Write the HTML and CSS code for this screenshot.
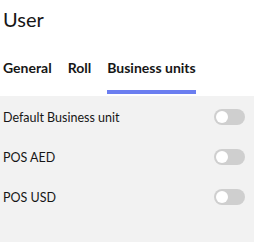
FILE: index.html
```html
<!DOCTYPE html>
<html lang="en">
<head>
    <meta charset="UTF-8">
    <meta name="viewport" content="width=device-width, initial-scale=1.0">
    <title>User</title>
    <link rel="stylesheet" href="styles.css">
</head>
<body>
    <div class="header">
        <h1 class="title">User</h1>
        <div class="tabs">
            <div class="tab">General</div>
            <div class="tab">Roll</div>
            <div class="tab active">Business units</div>
        </div>
    </div>

    <div class="panel">
        <div class="row">
            <span class="row-label">Default Business unit</span>
            <span class="toggle"><span class="knob"></span></span>
        </div>
        <div class="row">
            <span class="row-label">POS AED</span>
            <span class="toggle"><span class="knob"></span></span>
        </div>
        <div class="row">
            <span class="row-label">POS USD</span>
            <span class="toggle"><span class="knob"></span></span>
        </div>
    </div>
</body>
</html>
```

FILE: styles.css
```css
:root {
    --primary: #6b7ef0;
    --panel: #f2f2f2;
    --text: #161616;
    --toggle: #cfcfcf;
}

* {
    box-sizing: border-box;
    margin: 0;
    padding: 0;
}

html, body {
    height: 100%;
}

body {
    font-family: 'Lato', sans-serif;
    color: var(--text);
    background: #fff;
    display: flex;
    flex-direction: column;
}

.header {
    padding: 7px 0 2px 3px;
}

.title {
    font-size: 20px;
    line-height: 24px;
    font-weight: 400;
}

.tabs {
    display: flex;
    gap: 16px;
    margin-top: 28px;
}

.tab {
    font-size: 14px;
    line-height: 17px;
    font-weight: 700;
    padding-bottom: 14px;
    border-bottom: 4px solid transparent;
}

.tab.active {
    border-bottom-color: var(--primary);
}

.panel {
    flex: 1;
    background: var(--panel);
    padding-top: 1px;
}

.row {
    height: 40px;
    display: flex;
    align-items: center;
    justify-content: space-between;
    padding: 0 9px 0 3px;
}

.row-label {
    font-size: 12.5px;
}

.toggle {
    width: 31px;
    height: 16px;
    border-radius: 8px;
    background: var(--toggle);
    display: flex;
    align-items: center;
    padding: 0 2px;
}

.knob {
    width: 12px;
    height: 12px;
    border-radius: 50%;
    background: #fff;
}
```
